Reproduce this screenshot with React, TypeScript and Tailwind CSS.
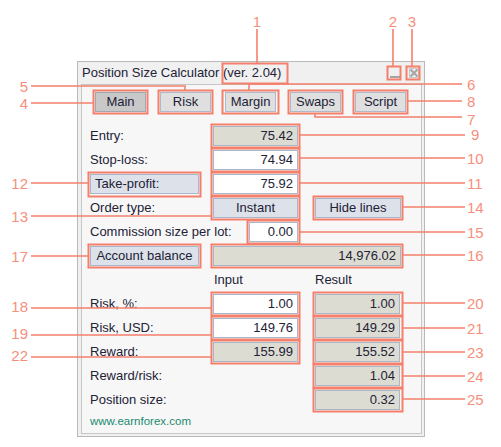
import React from "react";

// annotation overlay data: box = [x1, y1, x2, y2] outer edges
const boxes: [number, number, number, number][] = [
  [222, 63, 287, 83],
  [387, 66, 400, 79],
  [406, 66, 419, 79],
  [93, 90, 147, 113],
  [158, 90, 212, 113],
  [222, 90, 278, 113],
  [288, 90, 342, 113],
  [353, 90, 407, 113],
  [211, 124, 299, 147],
  [211, 148, 299, 171],
  [211, 172, 299, 195],
  [88, 172, 200, 196],
  [211, 196, 299, 219],
  [313, 196, 402, 219],
  [247, 220, 299, 243],
  [211, 244, 402, 267],
  [88, 244, 200, 267],
  [211, 292, 299, 315],
  [211, 316, 299, 339],
  [211, 340, 299, 363],
  [313, 292, 402, 315],
  [313, 316, 402, 339],
  [313, 340, 402, 363],
  [313, 364, 402, 387],
  [313, 388, 402, 411],
];

// leader lines as polylines
const lines: string[] = [
  "257,29 257,63",
  "393,29 393,66",
  "412,29 412,66",
  "31,103 93,103",
  "31,86 185,86 185,90",
  "249,90 249,84 462,84",
  "315,113 315,117 462,117",
  "407,101 462,101",
  "299,135 465,135",
  "299,158 465,158",
  "299,183 465,183",
  "402,207 465,207",
  "299,232 465,232",
  "402,255 465,255",
  "31,183 88,183",
  "31,216 211,216",
  "31,256 88,256",
  "31,308 211,308",
  "31,335 211,335",
  "31,357 211,357",
  "402,303 465,303",
  "402,328 465,328",
  "402,352 465,352",
  "402,376 465,376",
  "402,399 465,399",
];

// numbers: label, x, y (center), anchor
const nums: [string, number, number, "start" | "middle" | "end"][] = [
  ["1", 257, 21, "middle"],
  ["2", 393, 21, "middle"],
  ["3", 412, 21, "middle"],
  ["4", 28, 103, "end"],
  ["5", 28, 86, "end"],
  ["6", 467, 84, "start"],
  ["7", 467, 119, "start"],
  ["8", 467, 101, "start"],
  ["9", 471, 134, "start"],
  ["10", 467, 158, "start"],
  ["11", 467, 183, "start"],
  ["14", 467, 207, "start"],
  ["15", 467, 232, "start"],
  ["16", 467, 255, "start"],
  ["12", 28, 183, "end"],
  ["13", 28, 216, "end"],
  ["17", 28, 256, "end"],
  ["18", 28, 306, "end"],
  ["19", 28, 333, "end"],
  ["22", 28, 355, "end"],
  ["20", 467, 303, "start"],
  ["21", 467, 328, "start"],
  ["23", 467, 352, "start"],
  ["24", 467, 376, "start"],
  ["25", 467, 399, "start"],
];

function Field({ value, edit, w = "w-[85px]" }: { value: string; edit?: boolean; w?: string }) {
  return (
    <div
      className={`${w} h-[20px] border border-[#a8b7c9] ${edit ? "bg-white" : "bg-[#dddcd3]"} text-right pr-[4px] leading-[18px]`}
    >
      {value}
    </div>
  );
}

function Row({ label, children }: { label: React.ReactNode; children?: React.ReactNode }) {
  return (
    <div className="flex h-[20px] items-center">
      <div className="w-[123px] shrink-0">{label}</div>
      {children}
    </div>
  );
}

export default function App() {
  const tabs = ["Main", "Risk", "Margin", "Swaps", "Script"];

  return (
    <div
      className="relative w-[501px] h-[447px] bg-white overflow-hidden pt-[61px] pl-[77px] text-[13px] text-[#222236]"
      style={{ fontFamily: '"Liberation Sans", Arial, sans-serif' }}
    >
      {/* window */}
      <div className="w-[348px] h-[376px] border border-[#b9b9b9] bg-[#f0f0f0] flex flex-col">
        {/* title bar */}
        <div className="h-[22px] flex items-center pl-[4px] pr-[4px]">
          <span>Position Size Calculator (ver. 2.04)</span>
          <div className="ml-auto flex items-center gap-[7px]">
            <div className="w-[12px] h-[12px] flex items-end justify-center pb-[1px]">
              <div className="w-[10px] h-[2px] bg-[#a3a3a3]" />
            </div>
            <svg width="12" height="12" viewBox="0 0 12 12">
              <path d="M2.5 2.5 L9.5 9.5 M9.5 2.5 L2.5 9.5" stroke="#a6a6a6" strokeWidth="2.2" />
              <rect x="1.5" y="1.5" width="9" height="9" fill="none" stroke="#c8c8c8" strokeWidth="1" />
            </svg>
          </div>
        </div>

        {/* inner panel */}
        <div className="ml-[3px] w-[341px] h-[350px] border border-[#c6c6c6] bg-[#f7f7f7] flex flex-col">
          {/* tabs */}
          <div className="mt-[7px] ml-[13px] flex gap-[14px]">
            {tabs.map((t) => (
              <div
                key={t}
                className={`w-[51px] h-[20px] border text-center leading-[18px] ${
                  t === "Main" ? "bg-[#c8c8c8] border-[#a0a8b4]" : "bg-[#dfdfdf] border-[#aebacb]"
                }`}
              >
                {t}
              </div>
            ))}
          </div>

          {/* main rows */}
          <div className="mt-[14px] pl-[8px] flex flex-col gap-[4px]">
            <Row label="Entry:">
              <Field value="75.42" />
            </Row>
            <Row label="Stop-loss:">
              <Field value="74.94" edit />
            </Row>
            <Row
              label={
                <div className="w-[109px] h-[20px] border border-[#a8b7c9] bg-[#dde1e9] pl-[4px] leading-[18px]">
                  Take-profit:
                </div>
              }
            >
              <Field value="75.92" edit />
            </Row>
            <Row label="Order type:">
              <div className="w-[85px] h-[20px] border border-[#a8b7c9] bg-[#dde1e9] text-center leading-[18px]">
                Instant
              </div>
              <div className="w-[17px]" />
              <div className="w-[86px] h-[20px] border border-[#a8b7c9] bg-[#dde1e9] text-center leading-[18px]">
                Hide lines
              </div>
            </Row>
            <div className="flex h-[20px] items-center">
              <div className="w-[159px] shrink-0">Commission size per lot:</div>
              <Field value="0.00" edit w="w-[49px]" />
            </div>
            <Row
              label={
                <div className="w-[109px] h-[20px] border border-[#a8b7c9] bg-[#dde1e9] text-center leading-[18px]">
                  Account balance
                </div>
              }
            >
              <Field value="14,976.02" w="w-[188px]" />
            </Row>
          </div>

          {/* input / result */}
          <div className="mt-[4px] pl-[8px] flex h-[20px] items-center">
            <div className="w-[124px]" />
            <div className="w-[101px]">Input</div>
            <div>Result</div>
          </div>
          <div className="mt-[4px] pl-[8px] flex flex-col gap-[4px]">
            <Row label="Risk, %:">
              <Field value="1.00" edit />
              <div className="w-[17px]" />
              <Field value="1.00" />
            </Row>
            <Row label="Risk, USD:">
              <Field value="149.76" edit />
              <div className="w-[17px]" />
              <Field value="149.29" />
            </Row>
            <Row label="Reward:">
              <Field value="155.99" />
              <div className="w-[17px]" />
              <Field value="155.52" />
            </Row>
            <Row label="Reward/risk:">
              <div className="w-[102px]" />
              <Field value="1.04" />
            </Row>
            <Row label="Position size:">
              <div className="w-[102px]" />
              <Field value="0.32" />
            </Row>
          </div>
          <div className="mt-[2px] pl-[8px] h-[20px] flex items-center text-[11.5px] text-[#1a8a70]">
            www.earnforex.com
          </div>
        </div>
      </div>

      {/* annotation overlay */}
      <svg
        className="absolute inset-0 pointer-events-none"
        width="501"
        height="447"
        viewBox="0 0 501 447"
      >
        {boxes.map(([x1, y1, x2, y2], i) => (
          <rect
            key={i}
            x={x1 + 0.5}
            y={y1 + 0.5}
            width={x2 - x1}
            height={y2 - y1}
            fill="none"
            stroke="#f4806c"
            strokeWidth="2"
          />
        ))}
        {lines.map((p, i) => (
          <polyline key={i} points={p} fill="none" stroke="#f4806c" strokeWidth="1.6" />
        ))}
        {nums.map(([t, x, y, a]) => (
          <text
            key={t}
            x={x}
            y={y + 5.5}
            textAnchor={a}
            fontSize="15"
            fill="#f58f7c"
            fontFamily='"Liberation Sans", Arial, sans-serif'
          >
            {t}
          </text>
        ))}
      </svg>
    </div>
  );
}
